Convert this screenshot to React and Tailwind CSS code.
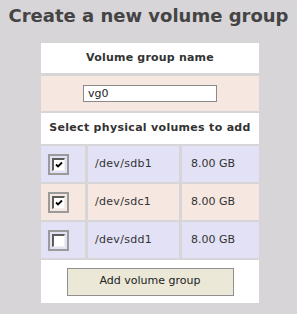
import React from 'react';

const devices = [
  { name: '/dev/sdb1', size: '8.00 GB', checked: true, bg: 'bg-[#e2e1f5]' },
  { name: '/dev/sdc1', size: '8.00 GB', checked: true, bg: 'bg-[#f6e7e1]' },
  { name: '/dev/sdd1', size: '8.00 GB', checked: false, bg: 'bg-[#e2e1f5]' },
];

const CheckBox = ({ checked }) => (
  <div className="w-[21px] h-[21px] border-2 border-[#9a9a9a] flex items-center justify-center">
    <div className="w-[13px] h-[13px] bg-white border-t-2 border-l-2 border-r border-b border-t-[#5c5c58] border-l-[#5c5c58] border-r-[#f0f0f0] border-b-[#f0f0f0] flex items-center justify-center">
      {checked && (
        <svg width="8" height="8" viewBox="0 0 8 8">
          <path d="M1 3.5 L3 5.5 L7 1.5" stroke="#000" strokeWidth="1.8" fill="none" />
        </svg>
      )}
    </div>
  </div>
);

const App = () => {
  return (
    <div className="min-h-[314px] bg-[#d7d5d8] font-['DejaVu_Sans',sans-serif] text-[#333]">
      <h1 className="pt-[5px] text-center text-[18px] leading-[21px] font-bold text-[#444]">
        Create a new volume group
      </h1>

      <div className="ml-[41px] mt-[17px] w-[218px] flex flex-col">
        <div className="h-[30px] bg-white flex items-center justify-center text-[11px] font-bold tracking-[0.2px]">
          Volume group name
        </div>
        <div className="mt-[3px] h-[35px] bg-[#f6e7e1] flex items-center justify-center">
          <input
            type="text"
            defaultValue="vg0"
            className="w-[134px] h-[17px] border border-[#8a8a8a] bg-white px-[4px] text-[11px] leading-[15px] text-[#222] outline-none"
          />
        </div>
        <div className="mt-[2px] h-[31px] bg-white flex items-center justify-center text-[11px] font-bold tracking-[0.3px]">
          Select physical volumes to add
        </div>

        {devices.map(dev => (
          <div key={dev.name} className="mt-[2px] h-[36px] flex gap-[3px] text-[11px]">
            <div className={`w-[44px] ${dev.bg} flex items-center pl-[7px]`}>
              <CheckBox checked={dev.checked} />
            </div>
            <div className={`w-[91px] ${dev.bg} flex items-center pl-[7px] tracking-[0.3px]`}>{dev.name}</div>
            <div className={`w-[77px] ${dev.bg} flex items-center pl-[9px]`}>{dev.size}</div>
          </div>
        ))}

        <div className="mt-[2px] h-[43px] bg-white flex items-center justify-center">
          <button className="w-[167px] h-[28px] border border-[#8f8f8f] bg-[#ebe8d8] text-[11px] text-[#222]">
            Add volume group
          </button>
        </div>
      </div>
    </div>
  );
};

export default App;
